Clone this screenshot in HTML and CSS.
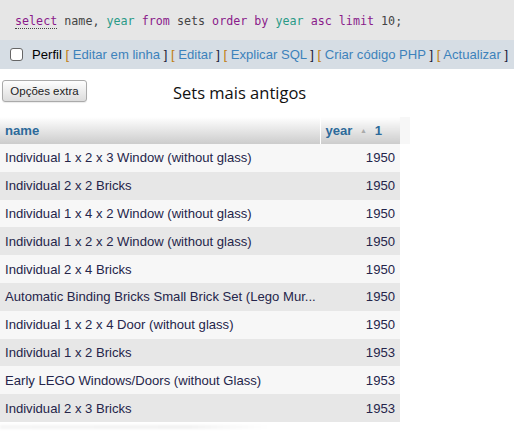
FILE: index.html
```html
<!DOCTYPE html>
<html>
<head>
<meta charset="utf-8">
<link rel="stylesheet" href="styles.css">
</head>
<body>
<div class="sql">
  <code><span class="kw dotted">select</span> name, <span class="col">year</span> <span class="kw">from</span> sets <span class="kw">order</span> <span class="kw">by</span> <span class="col">year</span> <span class="kw">asc</span> <span class="kw">limit</span> 10;</code>
</div>
<div class="bar"><span class="cb"></span><span class="perfil">Perfil</span> <span class="lb">[</span> <a>Editar em linha</a> <span class="rb">]</span> <span class="lb">[</span> <a>Editar</a> <span class="rb">]</span> <span class="lb">[</span> <a>Explicar SQL</a> <span class="rb">]</span> <span class="lb">[</span> <a>Criar código PHP</a> <span class="rb">]</span> <span class="lb">[</span> <a>Actualizar</a> <span class="rb">]</span></div>
<div class="opts">
  <button class="btn">Opções extra</button>
  <span class="caption">Sets mais antigos</span>
</div>
<div class="tablewrap">
<table class="data">
  <thead>
    <tr><th class="c-name">name</th><th class="c-year">year <span class="tri">▲</span> <span class="idx">1</span></th><th class="c-pad"></th></tr>
  </thead>
  <tbody>
    <tr><td>Individual 1 x 2 x 3 Window (without glass)</td><td class="num">1950</td><td class="pad"></td></tr>
    <tr><td>Individual 2 x 2 Bricks</td><td class="num">1950</td><td class="pad"></td></tr>
    <tr><td>Individual 1 x 4 x 2 Window (without glass)</td><td class="num">1950</td><td class="pad"></td></tr>
    <tr><td>Individual 1 x 2 x 2 Window (without glass)</td><td class="num">1950</td><td class="pad"></td></tr>
    <tr><td>Individual 2 x 4 Bricks</td><td class="num">1950</td><td class="pad"></td></tr>
    <tr><td>Automatic Binding Bricks Small Brick Set (Lego Mur...</td><td class="num">1950</td><td class="pad"></td></tr>
    <tr><td>Individual 1 x 2 x 4 Door (without glass)</td><td class="num">1950</td><td class="pad"></td></tr>
    <tr><td>Individual 1 x 2 Bricks</td><td class="num">1953</td><td class="pad"></td></tr>
    <tr><td>Early LEGO Windows/Doors (without Glass)</td><td class="num">1953</td><td class="pad"></td></tr>
    <tr><td>Individual 2 x 3 Bricks</td><td class="num">1953</td><td class="pad"></td></tr>
  </tbody>
</table>
</div>
<div class="shadow"></div>
</body>
</html>
```
FILE: styles.css
```css
html, body { margin: 0; padding: 0; background: #fff; }
body { font-family: "Liberation Sans", Arial, sans-serif; width: 514px; height: 432px; overflow: hidden; }

.sql {
  background: #e6e6e6;
  height: 40px;
  box-sizing: border-box;
  padding: 11px 0 0 15px;
}
.sql code {
  font-family: "DejaVu Sans Mono", monospace;
  font-size: 11.7px;
  color: #444;
}
.kw { color: #8a1a8a; }
.col { color: #2a9a86; }
.dotted { border-bottom: 1px dotted #444; }

.bar {
  background: #d6dde4;
  height: 29px;
  line-height: 29px;
  box-sizing: border-box;
  padding: 0 0 0 10px;
  font-size: 13.1px;
  white-space: nowrap;
  overflow: hidden;
}
.cb {
  display: inline-block;
  vertical-align: -2px;
  width: 11px; height: 11px;
  border: 1px solid #666;
  border-radius: 3px;
  background: #fff;
  margin-right: 9px;
}
.perfil { color: #000; }
.bar a { color: #3d82bb; }
.lb { color: #c07c10; }
.rb { color: #1a1a3a; }

.opts {
  display: flex;
  align-items: center;
  padding: 10px 0 0 2px;
  height: 33px;
  box-sizing: border-box;
}
.btn {
  font-family: "Liberation Sans", Arial, sans-serif;
  font-size: 11.5px;
  color: #222;
  height: 22px;
  width: 85px;
  padding: 0;
  border: 1px solid #aaa;
  border-radius: 3px;
  background: linear-gradient(#fefefe, #dcdcdc);
  box-shadow: 0 1px 1px rgba(0,0,0,0.08);
}
.caption {
  font-family: "Open Sans", sans-serif;
  font-size: 16.5px;
  color: #111;
  margin-left: 86px;
  margin-top: 3px;
}

.tablewrap { margin-top: 15px; }
.data {
  border-collapse: collapse;
  font-size: 13.1px;
  table-layout: fixed;
  width: 410px;
}
.data th {
  height: 27px;
  padding: 0 5px;
  text-align: left;
  color: #2d6a9a;
  font-weight: bold;
  background: linear-gradient(#ffffff, #cccccc);
}
.c-name { width: 320px; box-sizing: border-box; border-right: 1px solid #fff; }
.c-year { width: 80px; box-sizing: border-box; }
.data th.c-pad { width: 10px; padding: 0; background: #f7f7f7; }
.tri { color: #aaa; font-size: 7px; vertical-align: 2px; margin-left: 4px; }
.idx { margin-left: 4px; }
.data td {
  height: 27.8px;
  padding: 0 5px;
  color: #25254a;
  white-space: nowrap;
  overflow: hidden;
}
.data td.num { text-align: right; padding-right: 5px; }
.data td.pad { padding: 0; background: #fff !important; }
.data tbody tr:nth-child(odd) td { background: #f7f7f7; }
.data tbody tr:nth-child(even) td { background: #e7e7e7; }

.shadow {
  margin-top: 3px;
  width: 270px;
  height: 4px;
  background: linear-gradient(90deg, rgba(0,0,0,0.04), rgba(0,0,0,0.05) 70%, rgba(0,0,0,0));
  filter: blur(1px);
}
```
